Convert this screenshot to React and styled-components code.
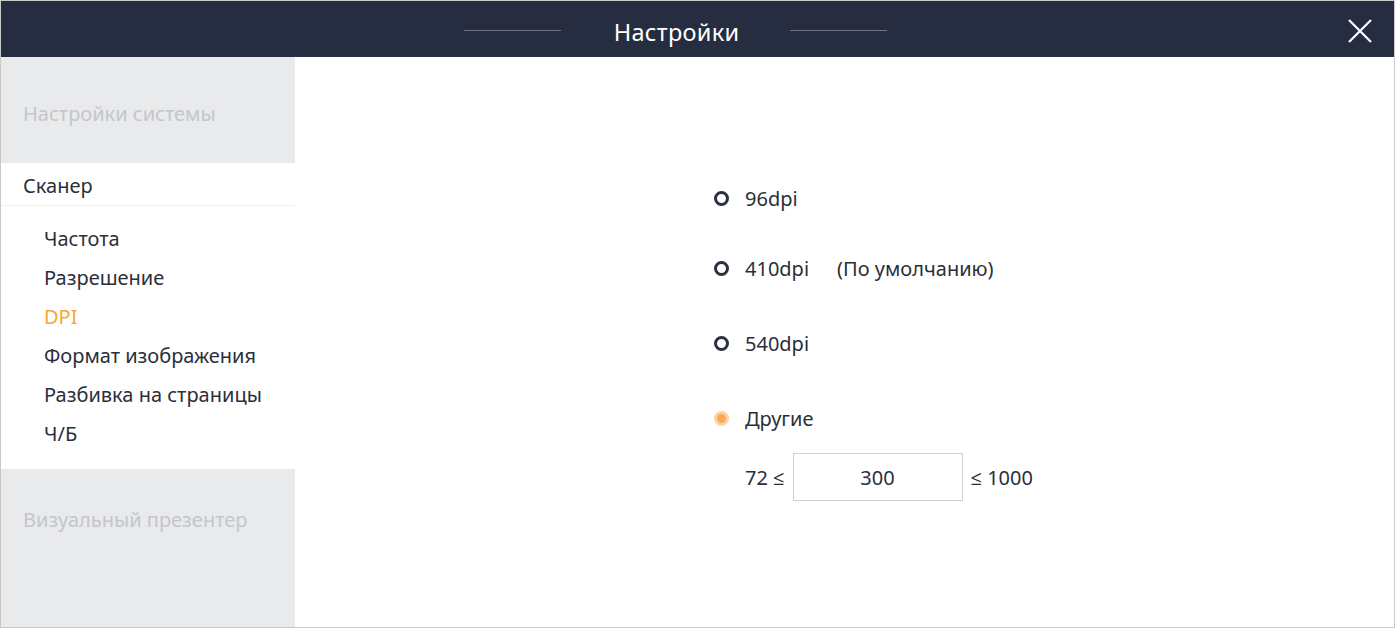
import styled, { createGlobalStyle } from 'styled-components';

const GlobalStyle = createGlobalStyle`
  html, body {
    margin: 0;
    padding: 0;
    background: #ffffff;
  }
  body {
    font-family: 'Noto Sans', 'Open Sans', sans-serif;
  }
  * {
    box-sizing: border-box;
  }
`;

const Window = styled.div`
  width: 1395px;
  height: 628px;
  border: 1px solid #c9c9c9;
  display: flex;
  flex-direction: column;
  overflow: hidden;
`;

const Header = styled.div`
  height: 56px;
  flex-shrink: 0;
  background: #262d41;
  display: flex;
  align-items: center;
  justify-content: center;
  padding-right: 44px;
  position: relative;
`;

const TitleLine = styled.span`
  width: 97px;
  height: 1px;
  margin-top: 2px;
  background: #70747d;
`;

const Title = styled.h1`
  margin: 6px 51px 0 53px;
  font-size: 23.5px;
  font-weight: 400;
  color: #ffffff;
  letter-spacing: 0.3px;
`;

const CloseButton = styled.button`
  position: absolute;
  right: 20px;
  top: 16px;
  width: 28px;
  height: 28px;
  padding: 0;
  border: none;
  background: transparent;
  cursor: pointer;
`;

const Body = styled.div`
  flex: 1;
  display: flex;
  min-height: 0;
`;

const Sidebar = styled.nav`
  width: 294px;
  flex-shrink: 0;
  display: flex;
  flex-direction: column;
  background: #e9eaec;
`;

const Section = styled.div`
  height: ${({ $height }) => $height}px;
  padding: ${({ $pad }) => $pad}px 22px 0;
  font-size: 20px;
  color: #c4c6cb;
  flex-shrink: 0;
`;

const SectionBottom = styled(Section)`
  flex: 1;
  height: auto;
`;

const ActiveGroup = styled.div`
  background: #ffffff;
`;

const GroupTitle = styled.div`
  height: 43px;
  padding: 2px 0 0 22px;
  display: flex;
  align-items: center;
  font-size: 20px;
  color: #2b2f3a;
  border-bottom: 1px solid #eeeff1;
`;

const SubList = styled.ul`
  list-style: none;
  margin: 0;
  padding: 13px 0 16px 43px;
`;

const SubItem = styled.li`
  height: 39px;
  line-height: 39px;
  font-size: 20px;
  color: ${({ $active }) => ($active ? '#f8a735' : '#2b2f3a')};
`;

const Main = styled.main`
  flex: 1;
  background: #ffffff;
  padding: 128px 0 0 419px;
  display: flex;
  flex-direction: column;
`;

const RadioRow = styled.label`
  display: flex;
  align-items: center;
  height: 26px;
  margin-top: ${({ $gap }) => $gap}px;
  font-size: 20px;
  color: #2b2f3a;
  cursor: pointer;
`;

const RadioMark = styled.span`
  width: 15px;
  height: 15px;
  border-radius: 50%;
  flex-shrink: 0;
  margin-right: 16px;
  border: ${({ $checked }) =>
    $checked ? '3px solid #fbd2a3' : '3px solid #2c3140'};
  background: ${({ $checked }) => ($checked ? '#f8aa52' : '#ffffff')};
`;

const Note = styled.span`
  margin-left: 28px;
`;

const RangeRow = styled.div`
  display: flex;
  align-items: center;
  gap: 8px;
  margin: 22px 0 0 31px;
  font-size: 20px;
  color: #2b2f3a;
`;

const ValueInput = styled.input`
  width: 170px;
  height: 48px;
  border: 1px solid #cfcfcf;
  text-align: center;
  font-family: inherit;
  font-size: 20px;
  color: #2b2f3a;
  outline: none;
`;

const options = [
  { label: '96dpi', gap: 0 },
  { label: '410dpi', note: '(По умолчанию)', gap: 44 },
  { label: '540dpi', gap: 49 },
  { label: 'Другие', gap: 49, checked: true },
];

const subItems = [
  'Частота',
  'Разрешение',
  'DPI',
  'Формат изображения',
  'Разбивка на страницы',
  'Ч/Б',
];

export default function App() {
  return (
    <>
      <GlobalStyle />
      <Window>
        <Header>
          <TitleLine />
          <Title>Настройки</Title>
          <TitleLine />
          <CloseButton aria-label="Закрыть">
            <svg width="28" height="28" viewBox="0 0 28 28">
              <path
                d="M3 3 L25 25 M25 3 L3 25"
                stroke="#ffffff"
                strokeWidth="2.2"
                fill="none"
              />
            </svg>
          </CloseButton>
        </Header>
        <Body>
          <Sidebar>
            <Section $height={106} $pad={43}>
              Настройки системы
            </Section>
            <ActiveGroup>
              <GroupTitle>Сканер</GroupTitle>
              <SubList>
                {subItems.map((item) => (
                  <SubItem key={item} $active={item === 'DPI'}>
                    {item}
                  </SubItem>
                ))}
              </SubList>
            </ActiveGroup>
            <SectionBottom $pad={37}>Визуальный презентер</SectionBottom>
          </Sidebar>
          <Main>
            {options.map((opt) => (
              <RadioRow key={opt.label} $gap={opt.gap}>
                <RadioMark $checked={opt.checked} />
                {opt.label}
                {opt.note && <Note>{opt.note}</Note>}
              </RadioRow>
            ))}
            <RangeRow>
              <span>72 ≤</span>
              <ValueInput defaultValue="300" />
              <span>≤ 1000</span>
            </RangeRow>
          </Main>
        </Body>
      </Window>
    </>
  );
}
